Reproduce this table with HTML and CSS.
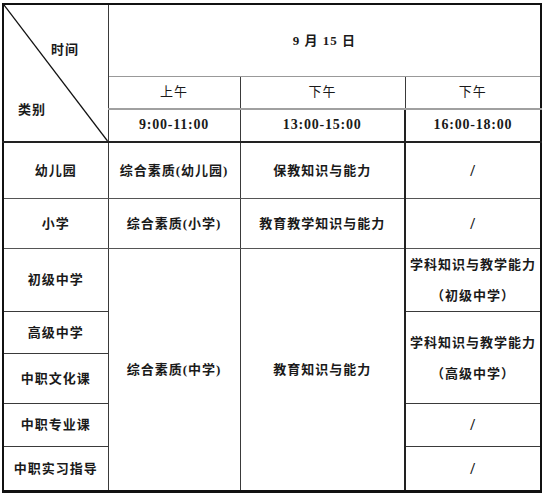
FILE: index.html
```html
<!DOCTYPE html>
<html lang="zh-CN">
<head>
<meta charset="utf-8">
<link rel="stylesheet" href="styles.css">
</head>
<body>
<table class="sched">
  <colgroup>
    <col class="c1"><col class="c2"><col class="c3"><col class="c4">
  </colgroup>
  <tr class="r-date">
    <td class="diag" rowspan="3">
      <svg class="diag-line" viewBox="0 0 100 100" preserveAspectRatio="none"><line x1="0" y1="0" x2="100" y2="100" stroke="#111" stroke-width="1.3" vector-effect="non-scaling-stroke"/></svg>
      <div class="diag-inner">
        <span class="lab-time">时间</span>
        <span class="lab-cat">类别</span>
      </div>
    </td>
    <td class="date" colspan="3">9 月 15 日</td>
  </tr>
  <tr class="r-half">
    <td class="half">上午</td>
    <td class="half">下午</td>
    <td class="half">下午</td>
  </tr>
  <tr class="r-time">
    <td class="time">9:00-11:00</td>
    <td class="time">13:00-15:00</td>
    <td class="time last">16:00-18:00</td>
  </tr>
  <tr class="r1">
    <td>幼儿园</td>
    <td>综合素质(幼儿园)</td>
    <td>保教知识与能力</td>
    <td class="slash last">/</td>
  </tr>
  <tr class="r2">
    <td>小学</td>
    <td>综合素质(小学)</td>
    <td>教育教学知识与能力</td>
    <td class="slash last">/</td>
  </tr>
  <tr class="r3">
    <td>初级中学</td>
    <td rowspan="5">综合素质(中学)</td>
    <td rowspan="5">教育知识与能力</td>
    <td class="two last">学科知识与教学能力<br>（初级中学）</td>
  </tr>
  <tr class="r4">
    <td>高级中学</td>
    <td class="two last" rowspan="2">学科知识与教学能力<br>（高级中学）</td>
  </tr>
  <tr class="r5">
    <td>中职文化课</td>
  </tr>
  <tr class="r6">
    <td>中职专业课</td>
    <td class="slash last">/</td>
  </tr>
  <tr class="r7">
    <td>中职实习指导</td>
    <td class="slash last">/</td>
  </tr>
</table>
</body>
</html>
```
FILE: styles.css
```css
html, body {
  margin: 0;
  padding: 0;
  background: #fff;
}
body {
  padding: 3px 0 0 2px;
}
.sched {
  border-collapse: collapse;
  table-layout: fixed;
  width: 538px;
  border-top: 2px solid #111;
  border-left: 2px solid #111;
  border-right: 2px solid #111;
  border-bottom: 3px solid #111;
  font-family: "Liberation Serif", "Noto Sans CJK SC", serif;
  font-size: 13px;
  font-weight: 700;
  color: #1a1a1a;
  letter-spacing: 1px;
}
.c1 { width: 105px; }
.c2 { width: 132px; }
.c3 { width: 165px; }
.c4 { width: 136px; }
.sched td {
  padding: 0;
  text-align: center;
  vertical-align: middle;
  border: 1px solid #3a3a3a;
  line-height: 16px;
}
.r-date td.date { height: 70px; border-bottom: 1px solid #999; }
.r-half td { height: 30px; border-bottom: 2px solid #a0a0a0; font-weight: 400; }
.r-time td { height: 31px; border-bottom: 2px solid #222; font-weight: 700; font-size: 14px; letter-spacing: 0.8px; }
.r1 td { height: 55px; }
.r2 td { height: 49px; }
.r3 td { height: 61px; }
.r4 td { height: 41px; }
.r5 td { height: 49px; }
.r6 td { height: 42px; }
.r7 td { height: 43px; }
.last { border-left: 2px solid #222 !important; }
.r1 td, .r2 td { border-bottom-color: #555; }
.diag {
  position: relative;
  text-align: left !important;
  vertical-align: top !important;
  border-bottom: 2px solid #222 !important;
}
.diag-line {
  position: absolute;
  left: 0;
  top: 0;
  width: 100%;
  height: 100%;
}
.diag-inner {
  display: flex;
  flex-direction: column;
  align-items: flex-start;
  padding: 37px 0 0 47px;
  height: 136px;
  box-sizing: border-box;
}
.lab-time { display: block; }
.lab-cat { display: block; margin: 44px 0 0 -33px; }
.date { font-weight: 700; }
.two { line-height: 31px !important; }
.slash { font-weight: 700; font-size: 17px; }
```
